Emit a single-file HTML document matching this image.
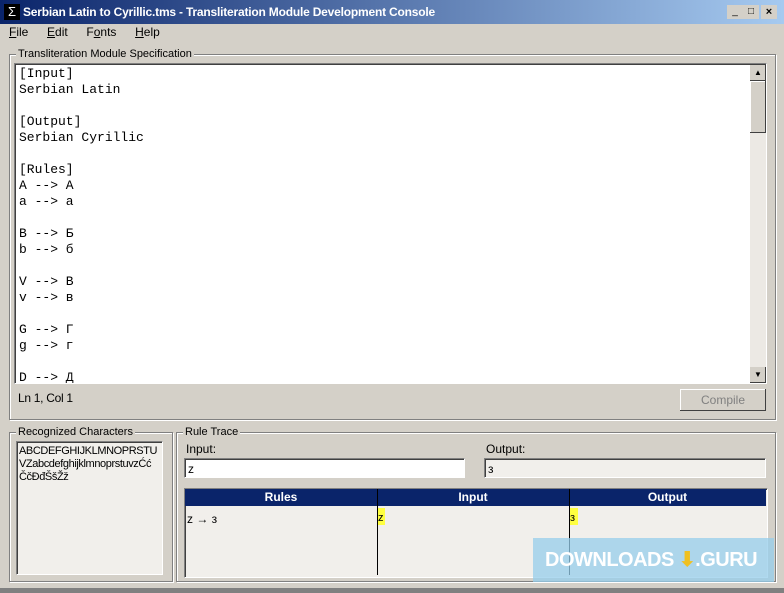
<!DOCTYPE html><html><head><style>
html,body{margin:0;width:784px;height:593px;overflow:hidden}
body{background:#d4d0c8;font-family:"Liberation Sans",sans-serif;font-size:11px;position:relative}
.a{position:absolute}
.grp{position:absolute;border:1px solid #808080;box-shadow:1px 1px 0 #fff inset,1px 1px 0 #fff}
.lg{position:absolute;background:#d4d0c8;padding:0 2px;top:-7px;left:6px;font-size:11px}
.sunk{position:absolute;border-top:1px solid #808080;border-left:1px solid #808080;border-right:1px solid #fff;border-bottom:1px solid #fff;box-shadow:inset 1px 1px 0 #404040}
pre{margin:0;font-family:"Liberation Mono",monospace;font-size:13px;line-height:16px}
</style></head><body>
<div class="a" style="left:0;top:0;width:784px;height:24px;background:linear-gradient(90deg,#0a246a,#a6caf0)"></div>
<div class="a" style="left:4px;top:4px;width:16px;height:16px;background:#000;color:#fff;font-size:13px;line-height:16px;text-align:center">Σ</div>
<div class="a" style="left:23px;top:5px;color:#fff;font-weight:bold;font-size:12px;letter-spacing:-0.2px">Serbian Latin to Cyrillic.tms - Transliteration Module Development Console</div>
<div class="a" style="left:727px;top:5px;width:16px;height:14px;background:#d4d0c8;font-size:10px;text-align:center;line-height:14px">_</div>
<div class="a" style="left:743px;top:5px;width:16px;height:14px;background:#d4d0c8;font-size:10px;text-align:center;line-height:14px">□</div>
<div class="a" style="left:761px;top:5px;width:16px;height:14px;background:#d4d0c8;font-size:11px;text-align:center;line-height:14px;font-weight:bold">×</div>
<div class="a" style="left:9px;top:25px;font-size:12px;word-spacing:6px"><u>F</u>ile &nbsp;<u>E</u>dit &nbsp;F<u>o</u>nts &nbsp;<u>H</u>elp</div>
<div class="grp" style="left:9px;top:54px;width:765px;height:364px"><span class="lg">Transliteration Module Specification</span></div>
<div class="sunk" style="left:14px;top:63px;width:751px;height:319px;background:#fff;overflow:hidden">
<pre style="padding:2px 0 0 4px">[Input]
Serbian Latin

[Output]
Serbian Cyrillic

[Rules]
A --> А
a --> а

B --> Б
b --> б

V --> В
v --> в

G --> Г
g --> г

D --> Д</pre>
<div class="a" style="right:0;top:1px;width:16px;height:317px;background:#ece9e4"></div>
<div class="a" style="right:0;top:1px;width:16px;height:16px;background:#d4d0c8;font-size:8px;text-align:center;line-height:16px;box-shadow:inset -1px -1px #404040">▲</div>
<div class="a" style="right:0;top:17px;width:16px;height:52px;background:#d4d0c8;box-shadow:inset -1px -1px #404040,inset 1px 1px #fff"></div>
<div class="a" style="right:0;bottom:0;width:16px;height:16px;background:#d4d0c8;font-size:8px;text-align:center;line-height:16px;box-shadow:inset -1px -1px #404040">▼</div>
</div>
<div class="a" style="left:18px;top:391px;font-size:12px;letter-spacing:-0.3px">Ln 1, Col 1</div>
<div class="a" style="left:680px;top:389px;width:86px;height:22px;box-shadow:inset -1px -1px #404040,inset 1px 1px #fff;color:#808080;text-align:center;line-height:22px;font-size:12px">Compile</div>
<div class="grp" style="left:9px;top:432px;width:162px;height:148px"><span class="lg">Recognized Characters</span></div>
<div class="sunk" style="left:16px;top:441px;width:147px;height:134px;background:#f1efeb;font-size:11px;line-height:13px;padding:3px 0 0 2px;box-sizing:border-box;letter-spacing:-0.4px;overflow:hidden">ABCDEFGHIJKLMNOPRSTU<br>VZabcdefghijklmnoprstuvzĆć<br>ČčĐđŠšŽž</div>
<div class="grp" style="left:176px;top:432px;width:598px;height:148px"><span class="lg">Rule Trace</span></div>
<div class="a" style="left:186px;top:442px;font-size:12px">Input:</div>
<div class="a" style="left:486px;top:442px;font-size:12px">Output:</div>
<div class="sunk" style="left:184px;top:458px;width:281px;height:20px;background:#fff;font-size:12px;line-height:20px;padding-left:3px;box-sizing:border-box">z</div>
<div class="sunk" style="left:484px;top:458px;width:282px;height:20px;background:#f1efeb;font-size:12px;line-height:20px;padding-left:3px;box-sizing:border-box">з</div>
<div class="sunk" style="left:184px;top:488px;width:582px;height:88px;background:#f1efeb"></div>
<div class="a" style="left:185px;top:489px;width:581px;height:17px;background:#0a246a;color:#fff;font-weight:bold;font-size:12px;line-height:17px">
<span class="a" style="left:0;width:192px;text-align:center">Rules</span><span class="a" style="left:192px;width:192px;text-align:center">Input</span><span class="a" style="left:384px;width:197px;text-align:center">Output</span></div>
<div class="a" style="left:377px;top:489px;width:1px;height:86px;background:#000"></div>
<div class="a" style="left:569px;top:489px;width:1px;height:86px;background:#000"></div>
<div class="a" style="left:187px;top:512px;font-size:12px">z → з</div>
<div class="a" style="left:378px;top:508px;width:7px;height:17px;background:#ffff40;font-size:11px;line-height:20px">z</div>
<div class="a" style="left:570px;top:508px;width:8px;height:17px;background:#ffff40;font-size:11px;line-height:20px">з</div>
<div class="a" style="left:533px;top:538px;width:241px;height:44px;background:rgba(150,205,235,.75);color:#fff;font-weight:bold;font-size:20px;line-height:44px;padding-left:12px;box-sizing:border-box;white-space:nowrap;letter-spacing:-0.5px">DOWNLOADS<span style="color:#f0c020"> ⬇</span>.GURU</div>
<div class="a" style="left:0;top:588px;width:784px;height:5px;background:#808080"></div>
</body></html>
